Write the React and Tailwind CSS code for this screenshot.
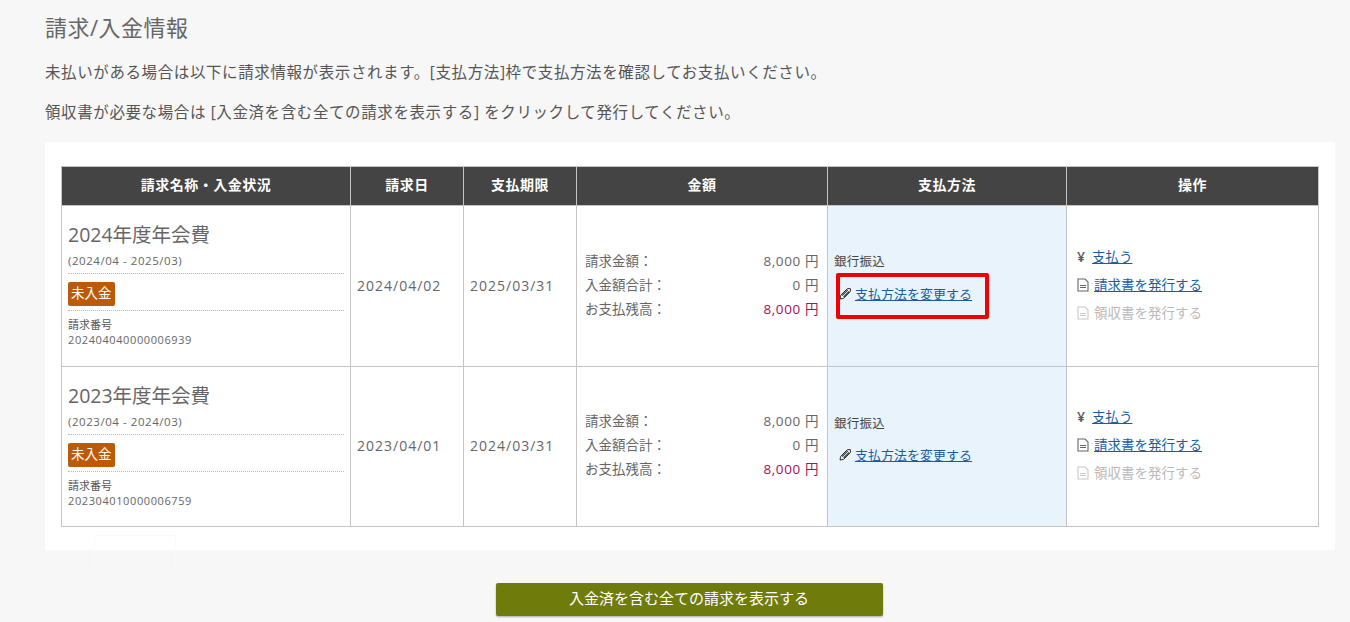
const rows = [
  {
    title: '2024年度年会費',
    period: '(2024/04 - 2025/03)',
    number: '202404040000006939',
    billed: '2024/04/02',
    due: '2025/03/31',
    marked: true,
  },
  {
    title: '2023年度年会費',
    period: '(2023/04 - 2024/03)',
    number: '202304010000006759',
    billed: '2023/04/01',
    due: '2024/03/31',
    marked: false,
  },
]

const headers = [
  ['請求名称・入金状況', 'w-[289px]'],
  ['請求日', 'w-[113px]'],
  ['支払期限', 'w-[113px]'],
  ['金額', 'w-[251px]'],
  ['支払方法', 'w-[239px]'],
  ['操作', 'w-[252px]'],
]

function PencilIcon() {
  return (
    <svg width="13" height="13" viewBox="0 0 13 13" fill="none" className="shrink-0">
      <path d="M1 12 L1.6 8.4 L8.4 1.6 L11.4 1.6 L11.4 4.6 L4.6 11.4 Z" stroke="#333" strokeWidth="1" strokeLinejoin="round" />
      <path d="M3 8.6 L8.8 2.8 M4.6 10 L10.2 4.4" stroke="#333" strokeWidth="1.1" />
      <path d="M1 12 L2.6 11.4 L1.6 10.4 Z" fill="#333" />
    </svg>
  )
}

function DocIcon({ color }) {
  return (
    <svg width="12" height="14" viewBox="0 0 12 14" fill="none" className="shrink-0">
      <path d="M1 1 H8 L11 4 V13 H1 Z" stroke={color} strokeWidth="1.1" />
      <path d="M3 7.5 H9 M3 9.5 H9" stroke={color} strokeWidth="1.2" />
    </svg>
  )
}

function AmountRow({ label, value, red }) {
  return (
    <div className="flex justify-between h-[24px] items-center">
      <span>{label}</span>
      <span className={red ? 'text-[#a8114f] tracking-[0.6px]' : 'tracking-[0.6px]'}>{value}</span>
    </div>
  )
}

function Row({ row }) {
  return (
    <tr className={row.marked ? 'h-[161px]' : 'h-[160px]'}>
      <td className="border border-[#c4c4c4] px-[6px] align-top pt-[16px]">
        <div className="text-[19.5px] leading-[26px] text-[#666] pb-[3px]">{row.title}</div>
        <div className="text-[11.5px] tracking-[0.55px] leading-[20px] text-[#666] pb-[2px] border-b border-dotted border-[#bbb]">{row.period}</div>
        <div className="border-b border-dotted border-[#bbb] h-[37px] pt-[3px] flex items-center">
          <span className="bg-[#bb5a08] text-[#fff] text-[13.5px] leading-[23px] px-[3px] rounded-[2px] h-[24px]">未入金</span>
        </div>
        <div className="text-[11px] leading-[15px] text-[#555] mt-[6px]">請求番号</div>
        <div className="text-[11px] tracking-[0.6px] leading-[15px] text-[#666]">{row.number}</div>
      </td>
      <td className="border border-[#c4c4c4] pl-[6px] pb-[2px] text-[14px] tracking-[1px] text-[#666]">{row.billed}</td>
      <td className="border border-[#c4c4c4] pl-[6px] pb-[2px] text-[14px] tracking-[1px] text-[#666]">{row.due}</td>
      <td className="border border-[#c4c4c4] px-[8px] pb-[2px] text-[13.5px] text-[#666]">
        <AmountRow label="請求金額：" value="8,000 円" />
        <AmountRow label="入金額合計：" value="0 円" />
        <AmountRow label="お支払残高：" value="8,000 円" red />
      </td>
      <td className={`border border-[#c4c4c4] bg-[#e8f3fc] pl-[6px] pr-[7px] relative ${row.marked ? 'pb-[17px]' : 'pb-[15px]'}`}>
        <div className={`text-[12.5px] tracking-[0.25px] leading-[18px] text-[#444] ${row.marked ? 'mb-[14px]' : 'mb-[13px]'}`}>銀行振込</div>
        <a className="flex items-center gap-[3px] pl-[5px] text-[13px] leading-[18px] text-[#1c5c9c] underline">
          <PencilIcon />
          支払方法を変更する
        </a>
        {row.marked && (
          <div className="absolute left-[8px] top-[67px] w-[153px] h-[46px] border-[4px] border-[#f00000] rounded-[2px]" />
        )}
      </td>
      <td className={`border border-[#c4c4c4] px-[10px] text-[13.5px] leading-[20px] ${row.marked ? 'pb-[2px]' : 'pb-[3px]'}`}>
        <div className="flex items-center gap-[5px] mb-[8px] text-[#1c5c9c]">
          <span className="text-[#555] text-[14px] font-semibold w-[10px]">¥</span>
          <a className="underline">支払う</a>
        </div>
        <div className="flex items-center gap-[5px] mb-[8px] text-[#1c5c9c]">
          <DocIcon color="#666" />
          <a className="underline">請求書を発行する</a>
        </div>
        <div className="flex items-center gap-[5px] text-[#bbb]">
          <DocIcon color="#c8c8c8" />
          <span>領収書を発行する</span>
        </div>
      </td>
    </tr>
  )
}

export default function App() {
  return (
    <div className="h-[622px] overflow-hidden bg-[#f7f7f7] pl-[45px] pr-[15px] font-['Open_Sans','Noto_Sans_CJK_JP',sans-serif]">
      <h1 className="text-[22px] tracking-[0.5px] leading-[28px] pt-[13px] text-[#666] font-normal">請求/入金情報</h1>
      <p className="text-[15.5px] tracking-[0.6px] leading-[20px] text-[#555] mt-[21px]">
        未払いがある場合は以下に請求情報が表示されます。[支払方法]枠で支払方法を確認してお支払いください。
      </p>
      <p className="text-[15.5px] tracking-[0.6px] leading-[20px] text-[#555] mt-[20px]">
        領収書が必要な場合は [入金済を含む全ての請求を表示する] をクリックして発行してください。
      </p>

      <div className="relative bg-white mt-[20px] h-[408px] pt-[24px] px-[16px]">
        <table className="w-[1257px] border-collapse table-fixed">
          <thead>
            <tr className="h-[39px] bg-[#444]">
              {headers.map(([label, width]) => (
                <th key={label} className={`${width} border border-[#c4c4c4] pb-[4px] text-[14px] tracking-[0.5px] font-bold text-white`}>
                  {label}
                </th>
              ))}
            </tr>
          </thead>
          <tbody>
            {rows.map((row) => (
              <Row key={row.number} row={row} />
            ))}
          </tbody>
        </table>
        <div className="absolute left-[49px] top-[393px] w-[82px] h-[36px] border border-b-0 border-[#fafafa] rounded-t-[2px]" />
      </div>

      <div className="flex justify-center mt-[33px] pr-[2px]">
        <button className="w-[387px] h-[33px] pb-[3px] bg-[#6f7b0b] rounded-[2px] text-white text-[15px] shadow-[0_1px_2px_rgba(0,0,0,0.3)]">
          入金済を含む全ての請求を表示する
        </button>
      </div>
    </div>
  )
}
